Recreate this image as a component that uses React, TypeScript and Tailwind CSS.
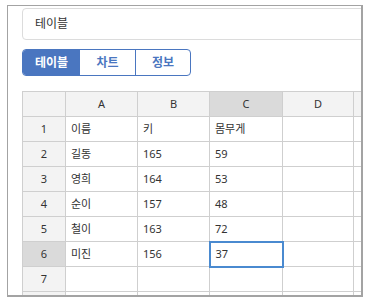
import React from "react";

// Sheet data: first row is header labels
const rows: string[][] = [
  ["이름", "키", "몸무게"],
  ["길동", "165", "59"],
  ["영희", "164", "53"],
  ["순이", "157", "48"],
  ["철이", "163", "72"],
  ["미진", "156", "37"],
  ["", "", ""],
  ["", "", ""],
];

const cols = ["A", "B", "C", "D", ""];

export default function App() {
  const font = { fontFamily: '"Noto Sans", "Noto Sans CJK KR", sans-serif' };
  return (
    <div className="w-[370px] h-[308px] bg-white pt-[5px] pl-[7px]" style={font}>
      <div className="w-[356px] h-[292px] border border-[#a3a3a3] border-r-2 border-b-2 overflow-hidden bg-white">
        <div className="w-[420px] pl-[14px] pt-[2px]">
          <div className="h-[32px] w-[380px] border border-[#dcdcdc] rounded-[4px] flex items-center pl-[12px] text-[12px] text-[#333]">
            테이블
          </div>

          <div className="mt-[9px] flex h-[27px] w-[169px] border border-[#4a76c0] rounded-[4px] overflow-hidden text-[12px] font-bold">
            <div className="w-[57px] flex items-center justify-center bg-[#4a76c0] text-white">
              테이블
            </div>
            <div className="w-[56px] flex items-center justify-center text-[#4a76c0] border-r border-[#4a76c0]">
              차트
            </div>
            <div className="flex-1 flex items-center justify-center text-[#4a76c0]">
              정보
            </div>
          </div>

          <table className="mt-[15px] table-fixed border-collapse text-[11px] text-[#333]">
            <colgroup>
              <col className="w-[43px]" />
              <col className="w-[72px]" />
              <col className="w-[72px]" />
              <col className="w-[73px]" />
              <col className="w-[71px]" />
              <col className="w-[60px]" />
            </colgroup>
            <thead>
              <tr className="h-[25px]">
                <th className="border border-[#cfcfcf] bg-[#f3f3f3]" />
                {cols.map((c, i) => (
                  <th
                    key={i}
                    className={
                      "border border-[#cfcfcf] font-normal text-center " +
                      (c === "C" ? "bg-[#dadada]" : "bg-[#f3f3f3]")
                    }
                  >
                    {c}
                  </th>
                ))}
              </tr>
            </thead>
            <tbody>
              {rows.map((r, ri) => (
                <tr key={ri} className="h-[25px]">
                  <td
                    className={
                      "border border-[#cfcfcf] text-center " +
                      (ri === 5 ? "bg-[#dadada]" : "bg-[#f3f3f3]")
                    }
                  >
                    {/* last row is mostly hidden by the frame */}
                    {ri < 7 ? ri + 1 : ""}
                  </td>
                  {r.map((v, ci) => (
                    <td
                      key={ci}
                      className={
                        "border px-[5px] " +
                        (ri === 5 && ci === 2
                          ? "border-2 border-[#4a8ad0]"
                          : "border-[#cfcfcf]")
                      }
                    >
                      {v}
                    </td>
                  ))}
                  <td className="border border-[#cfcfcf]" />
                  <td className="border border-[#cfcfcf]" />
                </tr>
              ))}
            </tbody>
          </table>
        </div>
      </div>
    </div>
  );
}
